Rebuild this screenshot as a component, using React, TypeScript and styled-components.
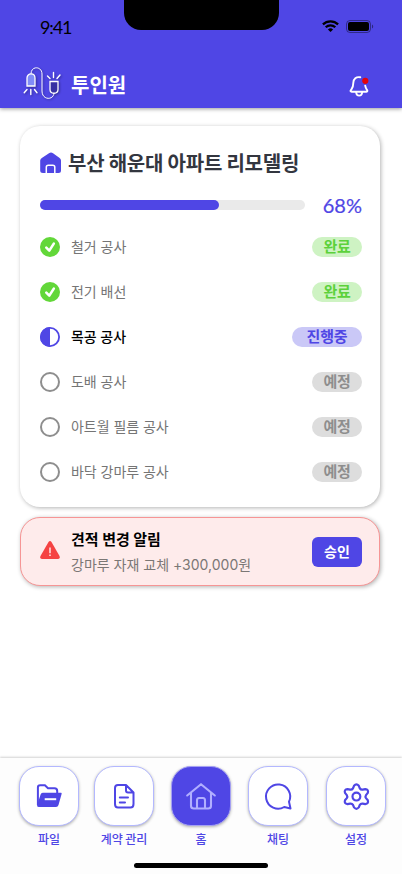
import React from 'react';
import styled, { createGlobalStyle } from 'styled-components';

const PRIMARY = '#4f46e5';

const GlobalStyle = createGlobalStyle`
  *, *::before, *::after { box-sizing: border-box; }
  html, body { margin: 0; padding: 0; background: #fff; }
  body { font-family: 'Noto Sans CJK KR', sans-serif; }
  svg { display: block; flex: none; overflow: visible; }
  button { border: 0; padding: 0; margin: 0; background: none; font: inherit; }
`;

const Screen = styled.div`
  width: 402px;
  height: 874px;
  display: flex;
  flex-direction: column;
  overflow: hidden;
  background: #fff;
`;

const Header = styled.header`
  position: relative;
  height: 108px;
  flex: none;
  background: ${PRIMARY};
  box-shadow: 0 1px 4px rgba(0, 0, 0, 0.4);
`;

const Notch = styled.div`
  position: absolute;
  top: 0;
  left: 123.5px;
  width: 155px;
  height: 30px;
  background: #000;
  border-radius: 0 0 17px 17px;
`;

const StatusBar = styled.div`
  display: flex;
  align-items: center;
  height: 52px;
  padding: 0 29px 0 40px;
`;

const Clock = styled.span`
  flex: 1;
  padding-top: 1px;
  font: 400 18px/24px Lato, sans-serif;
  letter-spacing: -1.1px;
`;

const StatusIcons = styled.div`
  display: flex;
  align-items: center;
  gap: 7px;
  height: 20px;
`;

const Brand = styled.div`
  display: flex;
  align-items: center;
  height: 36px;
  margin-top: 15px;
  padding: 0 33px 0 23px;
`;

const BrandName = styled.h1`
  flex: 1;
  margin: 0 0 0 10px;
  color: #fff;
  font-size: 20px;
  font-weight: 700;
  line-height: 28px;
`;

const BellSlot = styled.span`
  padding-top: 3px;
`;

const Main = styled.main`
  flex: 1;
  display: flex;
  flex-direction: column;
  gap: 10px;
  padding: 18px 22px 0 20px;
`;

const Card = styled.section`
  height: 381px;
  padding: 21px 18px 0 20px;
  border-radius: 20px;
  background: #fff;
  box-shadow: 1px 1px 4px rgba(0, 0, 0, 0.3);
`;

const CardHeading = styled.div`
  display: flex;
  align-items: center;
  gap: 6px;
  height: 32px;
`;

const CardTitle = styled.h2`
  margin: 0;
  padding-bottom: 2px;
  color: #33363f;
  font-size: 20px;
  font-weight: 700;
  line-height: 29px;
  letter-spacing: -0.22px;
  white-space: nowrap;
`;

const ProgressRow = styled.div`
  display: flex;
  align-items: center;
  justify-content: space-between;
  height: 24px;
  margin-top: 14px;
`;

const Track = styled.div`
  width: 265px;
  height: 10px;
  border-radius: 5px;
  background: #eaeaea;
`;

const Fill = styled.div`
  height: 100%;
  border-radius: 5px;
  background: ${PRIMARY};
`;

const Percent = styled.span`
  color: ${PRIMARY};
  font: 400 20px/24px Lato, sans-serif;
  -webkit-text-stroke: 0.2px ${PRIMARY};
`;

const StepList = styled.ul`
  display: grid;
  grid-auto-rows: 20px;
  gap: 25px;
  margin: 20px 0 0;
  padding: 0;
  list-style: none;
`;

const Step = styled.li`
  display: flex;
  align-items: center;
  gap: 11px;
`;

const StepName = styled.span<{ $active: boolean }>`
  flex: 1;
  color: ${(p) => (p.$active ? '#000' : '#757575')};
  font-family: Inter, 'Noto Sans CJK KR', sans-serif;
  font-size: 14px;
  font-weight: ${(p) => (p.$active ? 500 : 400)};
  line-height: 20px;
  letter-spacing: -0.05px;
`;

type Status = 'done' | 'doing' | 'todo';

const badgeColors: Record<Status, [string, string]> = {
  done: ['#cef3c3', '#5cd13b'],
  doing: ['#cac8f7', PRIMARY],
  todo: ['#dddddd', '#8e8e8e'],
};

const Badge = styled.span<{ $status: Status }>`
  width: ${(p) => (p.$status === 'doing' ? 70 : 50)}px;
  height: 20px;
  border-radius: 10px;
  background: ${(p) => badgeColors[p.$status][0]};
  color: ${(p) => badgeColors[p.$status][1]};
  font-size: 15px;
  font-weight: 700;
  line-height: 18px;
  letter-spacing: -0.2px;
  text-align: center;
`;

const Alert = styled.section`
  display: flex;
  align-items: center;
  height: 69px;
  padding: 0 17px 0 19px;
  border: 1px solid #f69595;
  border-radius: 20px;
  background: #feebeb;
  box-shadow: 1px 1px 4px rgba(0, 0, 0, 0.3);
`;

const AlertText = styled.div`
  flex: 1;
  margin-left: 11px;
  padding-top: 1px;
  font-family: Inter, 'Noto Sans CJK KR', sans-serif;
`;

const AlertTitle = styled.h3`
  margin: 0;
  color: #000;
  font-size: 15px;
  font-weight: 700;
  line-height: 25px;
`;

const AlertDetail = styled.p`
  margin: 0;
  color: #7b7775;
  font-size: 14px;
  line-height: 25px;
  white-space: nowrap;
`;

const ApproveButton = styled.button`
  width: 50px;
  height: 30px;
  border-radius: 6px;
  background: ${PRIMARY};
  color: #fff;
  font-size: 14px;
  font-weight: 700;
  line-height: 28px;
  padding-bottom: 2px;
`;

const Footer = styled.footer`
  flex: none;
  height: 116px;
  background: #fdfdfd;
  box-shadow: 0 -1px 2px rgba(0, 0, 0, 0.18);
`;

const Nav = styled.nav`
  display: grid;
  grid-template-columns: 75px 77px 77px 78px 60px;
  height: 105px;
  padding: 8px 0 0 19px;
`;

const NavItem = styled.div`
  display: flex;
  flex-direction: column;
  align-items: center;
  width: 60px;
`;

const NavButton = styled.button<{ $active: boolean }>`
  display: grid;
  place-items: center;
  width: 60px;
  height: 60px;
  border: 1px solid ${(p) => (p.$active ? '#a5a1f3' : '#b3b8ff')};
  border-radius: 20px;
  background: ${(p) => (p.$active ? PRIMARY : '#fff')};
  box-shadow: 0 1px 3px rgba(0, 0, 0, 0.3);
`;

const NavLabel = styled.span`
  margin-top: 4px;
  color: ${PRIMARY};
  font-size: 12px;
  font-weight: 500;
  line-height: 18px;
  letter-spacing: -0.1px;
  white-space: nowrap;
`;

const HomeBar = styled.div`
  width: 134px;
  height: 5px;
  margin: 0 auto;
  border-radius: 3px;
  background: #000;
`;

const WifiIcon = () => (
  <svg width="17" height="12" viewBox="0 0 17 12" fill="none" stroke="#000" strokeWidth="2.200">
    <path d="M.9 4.400a11 11 0 0 1 15.200 0" />
    <path d="M3.700 7.300a7 7 0 0 1 9.600 0" />
    <path d="M5.900 9.400a4 4 0 0 1 5.200 0L8.500 12z" fill="#000" stroke="none" />
  </svg>
);

const BatteryIcon = () => (
  <svg width="27" height="13" viewBox="0 0 27 13">
    <rect x=".5" y=".5" width="24" height="12" rx="3.500" fill="none" stroke="#000" opacity=".4" />
    <rect x="2" y="2" width="21" height="9" rx="2" />
    <path d="M26 4.500c1.600.8 1.600 3.200 0 4z" opacity=".45" />
  </svg>
);

const Logo = () => (
  <svg width="38" height="36" viewBox="0 0 38 36" fill="none" stroke="#fff" strokeLinecap="round">
    <g style={{ filter: 'drop-shadow(1px 1px 1px rgba(0,0,0,.35))' }}>
      <path d="M8 6.500C8-1.500 19-1 19 7v17c0 9.500 12 9.500 12 2" strokeWidth="1" />
      <path d="M4 19v-8c0-5.500 8-5.500 8 0v8z" fill="#818cf8" strokeWidth="1.300" />
      <path d="M27 14.500h8v8c0 5-8 5-8 0z" fill="#3730a3" strokeWidth="1.300" />
      <path d="M7.800 22.500v5M4 22.500l-2.800 3.200M11.500 22.500l2.500 3.200M30.500 10.500v-5M27 11.500 24.500 9M34 11.500 37 8" strokeWidth="1.400" />
    </g>
  </svg>
);

const BellIcon = () => (
  <svg width="20" height="22" viewBox="-.3 0 20 22" fill="none" stroke="#fff" strokeWidth="1.900" strokeLinecap="round" strokeLinejoin="round">
    <path d="M11 1.300C7 .4 4 3 4 7c0 4.500-1.200 5.300-2.400 7-.9 1.300-.2 1.700.7 1.700h14.600c1 0 1.600-.6.900-1.600-1-1.400-1.600-2.600-1.900-4.400" />
    <path d="M6.900 16.500c.3 4.200 5.600 4.200 5.900 0" />
    <circle cx="16" cy="4.800" r="3.100" fill="#e4040a" stroke="none" />
  </svg>
);

const HouseIcon = () => (
  <svg width="22" height="22" viewBox="0 0 22 22">
    <path d="M2.200 5.800 9 1.200q2-1.300 4 0l6.300 4.600Q21 6.900 21 8.400V18.500q0 2.500-2.500 2.500H3Q.2 21 .2 18.500V8.400q0-1.500 2-2.600z" fill={PRIMARY} />
    <path d="M6.300 21.500v-6.300q0-2 2-2h4.500q2 0 2 2v6.300" fill="none" stroke="#fff" strokeWidth="1.500" />
  </svg>
);

const StatusIcon = ({ status }: { status: Status }) => (
  <svg width="20" height="20" viewBox="0 0 20 20" fill="none">
    {status === 'done' && (
      <>
        <circle cx="10" cy="10" r="10" fill="#62d739" />
        <path d="m6.300 10.600 3 3 4.500-7" stroke="#fff" strokeWidth="2.600" strokeLinecap="round" strokeLinejoin="round" />
      </>
    )}
    {status === 'doing' && (
      <>
        <circle cx="10" cy="10" r="9.100" stroke={PRIMARY} strokeWidth="1.800" />
        <path d="M10 0a10 10 0 0 0 0 20z" fill={PRIMARY} />
      </>
    )}
    {status === 'todo' && <circle cx="10" cy="10" r="9" stroke="#8e8e8e" strokeWidth="2" />}
  </svg>
);

const WarningSlot = styled.span`
  padding-bottom: 3px;
`;

const WarningIcon = () => (
  <svg width="20" height="18" viewBox="0 0 20 18">
    <path d="M8.500.9q1.500-1.800 3 0l8 14.200q1.200 2.700-1.700 2.900H2.200Q-.7 17.800.5 15.100z" fill="#f54343" />
    <path d="M10 6.500v5.800M10 13.500v1.500" stroke="#fff" strokeWidth="1.300" />
  </svg>
);

const FolderIcon = () => (
  <svg width="26" height="26" viewBox=".3 0 26 26" fill="none">
    <path d="M2.200 22V4.500q0-2.300 2.300-2.300h4.700l3.100 3h6.500q2.700 0 2.700 2.700V10" stroke={PRIMARY} strokeWidth="2" />
    <path d="M7 9.800h18.300q1 0 .6 1.300L22.800 22q-.6 2-2.500 2H3q-2 0-1.600-1.800L4.900 11.500q.5-1.700 2.100-1.700z" fill={PRIMARY} />
    <path d="M9 16.200h11.500" stroke="#fff" strokeWidth="2" />
  </svg>
);

const DocumentIcon = () => (
  <svg width="22" height="26" viewBox="0 0 22 26" fill="none" stroke={PRIMARY} strokeWidth="2" strokeLinecap="round" strokeLinejoin="round">
    <path d="M13 2H5Q2 2 2 5v16q0 3.500 3 3.500h12.500q3 0 3-3.500V9.500zM13 2v5.500q0 2 2 2h5.500M6.800 14.500h8.200M6.800 19.500h5.200" />
  </svg>
);

const HomeIcon = () => (
  <svg width="30" height="28" viewBox="0 0 30 28" fill="none" stroke="#b1afff" strokeWidth="2.100" strokeLinecap="round" strokeLinejoin="round">
    <path d="M1.200 13.500 15 2.200l13.800 11.300M5 11v12.700q0 2.800 2.800 2.800h14.400q2.800 0 2.800-2.800V11M11 26v-7.500q0-2.500 2-2.500h4q2 0 2 2.500V26" />
  </svg>
);

const ChatIcon = () => (
  <svg width="28" height="28" viewBox="-1.200 0 28 28" fill="none" stroke={PRIMARY} strokeWidth="2" strokeLinejoin="round">
    <path d="M23.800 19.800A12.100 12.100 0 1 0 19 25l6.300 1.500z" />
  </svg>
);

const GearIcon = () => (
  <svg width="26" height="28" viewBox="-.4 -.6 26 28" fill="none" stroke={PRIMARY} strokeWidth="2.200" strokeLinejoin="round">
    <path d="M10.600 3.200q2.400-2.800 4.800 0l1 2.500q1 1.600 2.900 1.300l2.600-.5q3.600.4 2.500 3.800l-1.800 2.200q-1 1.500 0 3l1.800 2.200q1.100 3.400-2.500 3.800l-2.600-.5q-1.900-.3-2.900 1.300l-1 2.500q-2.400 2.800-4.800 0l-1-2.500Q8.600 20.700 6.700 21l-2.600.5Q.5 21.100 1.600 17.700l1.800-2.200q1-1.500 0-3l-1.800-2.200Q.5 6.900 4.100 6.500L6.700 7q1.900.3 2.900-1.300z" />
    <circle cx="13" cy="14" r="3.900" />
  </svg>
);

const steps: { name: string; status: Status; label: string }[] = [
  { name: '철거 공사', status: 'done', label: '완료' },
  { name: '전기 배선', status: 'done', label: '완료' },
  { name: '목공 공사', status: 'doing', label: '진행중' },
  { name: '도배 공사', status: 'todo', label: '예정' },
  { name: '아트월 필름 공사', status: 'todo', label: '예정' },
  { name: '바닥 강마루 공사', status: 'todo', label: '예정' },
];

const tabs = [
  { label: '파일', Icon: FolderIcon },
  { label: '계약 관리', Icon: DocumentIcon },
  { label: '홈', Icon: HomeIcon, active: true },
  { label: '채팅', Icon: ChatIcon },
  { label: '설정', Icon: GearIcon },
];

export default function App() {
  const progress = 68;
  return (
    <Screen>
      <GlobalStyle />
      <Header>
        <Notch />
        <StatusBar>
          <Clock>9:41</Clock>
          <StatusIcons>
            <WifiIcon />
            <BatteryIcon />
          </StatusIcons>
        </StatusBar>
        <Brand>
          <Logo />
          <BrandName>투인원</BrandName>
          <BellSlot>
            <BellIcon />
          </BellSlot>
        </Brand>
      </Header>
      <Main>
        <Card>
          <CardHeading>
            <HouseIcon />
            <CardTitle>부산 해운대 아파트 리모델링</CardTitle>
          </CardHeading>
          <ProgressRow>
            <Track>
              <Fill style={{ width: `${progress - 0.5}%` }} />
            </Track>
            <Percent>{progress}%</Percent>
          </ProgressRow>
          <StepList>
            {steps.map((s) => (
              <Step key={s.name}>
                <StatusIcon status={s.status} />
                <StepName $active={s.status === 'doing'}>{s.name}</StepName>
                <Badge $status={s.status}>{s.label}</Badge>
              </Step>
            ))}
          </StepList>
        </Card>
        <Alert>
          <WarningSlot>
            <WarningIcon />
          </WarningSlot>
          <AlertText>
            <AlertTitle>견적 변경 알림</AlertTitle>
            <AlertDetail>강마루 자재 교체 +300,000원</AlertDetail>
          </AlertText>
          <ApproveButton>승인</ApproveButton>
        </Alert>
      </Main>
      <Footer>
        <Nav>
          {tabs.map(({ label, Icon, active }) => (
            <NavItem key={label}>
              <NavButton $active={!!active} aria-label={label}>
                <Icon />
              </NavButton>
              <NavLabel>{label}</NavLabel>
            </NavItem>
          ))}
        </Nav>
        <HomeBar />
      </Footer>
    </Screen>
  );
}
